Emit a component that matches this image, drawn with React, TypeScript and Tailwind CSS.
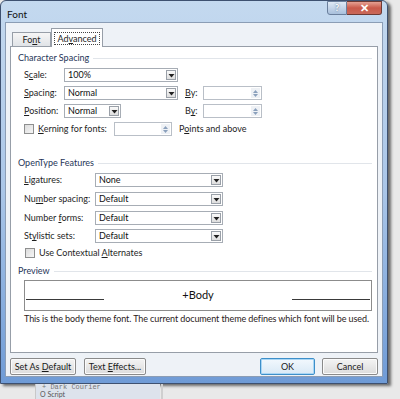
import React from "react";

function U({ children }: { children: React.ReactNode }) {
  return <span className="underline underline-offset-[1px]">{children}</span>;
}

function Tri() {
  return (
    <svg width="7" height="5" viewBox="0 0 7 5">
      <path d="M0.5 1 L6.5 1 L3.5 4.5 Z" fill="#222" />
    </svg>
  );
}

function Combo({ value, w }: { value: string; w: string }) {
  return (
    <div className={"flex h-[14px] items-stretch border border-[#a7adb5] bg-white " + w}>
      <span className="flex-1 pl-[3px] leading-[12px] text-[#111]">{value}</span>
      <span className="m-[1px] flex w-[10px] items-center justify-center border border-[#9aa0a8] bg-gradient-to-b from-[#fafafa] to-[#dedede]">
        <Tri />
      </span>
    </div>
  );
}

function Spin({ w }: { w: string }) {
  return (
    <div className={"flex h-[14px] items-stretch border border-[#b9bfc7] bg-white " + w}>
      <span className="flex-1" />
      <span className="m-[1px] flex w-[9px] flex-col items-center justify-center gap-[1px] bg-[#eef1f5]">
        <svg width="5" height="3" viewBox="0 0 5 3">
          <path d="M0 3 L5 3 L2.5 0 Z" fill="#8aa0bc" />
        </svg>
        <svg width="5" height="3" viewBox="0 0 5 3">
          <path d="M0 0 L5 0 L2.5 3 Z" fill="#8aa0bc" />
        </svg>
      </span>
    </div>
  );
}

function Check() {
  return <span className="h-[10px] w-[10px] border border-[#8e8f8f] bg-gradient-to-br from-[#dcdcdc] to-[#f6f6f6]" />;
}

function Heading({ text }: { text: string }) {
  return (
    <div className="flex h-[12px] items-center pl-[7px] pr-[5px]">
      <span className="text-[#1f3558]">{text}</span>
      <span className="ml-[4px] h-px flex-1 bg-[#e1e5ea]" />
    </div>
  );
}

function Btn({ children, w, def }: { children: React.ReactNode; w: string; def?: boolean }) {
  return (
    <div
      className={
        "flex h-[17px] items-center justify-center rounded-[2px] border bg-gradient-to-b text-[#1a1a1a] " +
        w +
        (def
          ? " border-[#3d8fc9] from-[#f2f8fd] to-[#d9e9f6] shadow-[inset_0_0_0_1px_#a9d6f5]"
          : " border-[#8a8a8a] from-[#f4f4f4] to-[#dcdcdc] shadow-[inset_0_0_0_1px_#fbfbfb]")
      }
    >
      <span>{children}</span>
    </div>
  );
}

export default function App() {
  return (
    <div className="flex h-[399px] w-[400px] flex-col overflow-hidden bg-[#e9e9e9] font-['Lato',sans-serif] text-[9px] text-[#1e1e1e]">
      <div className="flex h-[384px] w-[388px] shrink-0 flex-col rounded-t-[6px] border border-[#3e5170] bg-gradient-to-b from-[#c4d9ef] via-[#aac6e8] to-[#6f9bd6] px-[4px] pb-[6px] shadow-[3px_2px_3px_rgba(0,0,0,0.55)]">
        {/* title bar */}
        <div className="flex h-[21px] shrink-0 items-start">
          <span className="mt-[6px] ml-[2px] text-[10px] text-[#111]">Font</span>
          <div className="ml-auto mr-[1px] flex h-[14px]">
            <div className="flex w-[20px] items-center justify-center rounded-bl-[3px] border border-[#6a7f9c] bg-gradient-to-b from-[#dfe9f5] to-[#a9c0dc] text-[9px] font-bold text-white [text-shadow:0_0_2px_#35506f]">
              ?
            </div>
            <div className="flex w-[35px] items-center justify-center rounded-br-[3px] border border-l-0 border-[#6e3a34] bg-gradient-to-b from-[#e5a093] via-[#c9594a] to-[#c9695a] text-[11px] font-bold text-white">
              ✕
            </div>
          </div>
        </div>

        {/* client area */}
        <div className="flex flex-1 flex-col border border-[#8b9db5] bg-[#eef2f7] px-[4px]">
          {/* tabs */}
          <div className="mt-[5px] flex h-[18px] items-end pl-[2px]">
            <div className="flex h-[14px] w-[39px] items-center justify-center border border-b-0 border-[#979ea8] bg-gradient-to-b from-[#f6f6f6] to-[#e0e3e7]">
              <span>
                Fo<U>n</U>t
              </span>
            </div>
            <div className="relative z-10 -mb-px flex h-[19px] w-[52px] items-center justify-center border border-b-0 border-[#979ea8] bg-white">
              <span className="border border-dotted border-[#444] px-[2px] leading-[11px]">
                Ad<U>v</U>anced
              </span>
            </div>
          </div>

          {/* panel */}
          <div className="flex h-[307px] flex-col border border-[#979ea8] bg-white">
            <div className="mt-[5px]">
              <Heading text="Character Spacing" />
            </div>

            <div className="mt-[4px] flex h-[14px] items-center pl-[13px]">
              <span className="w-[40px]">
                S<U>c</U>ale:
              </span>
              <Combo value="100%" w="w-[114px]" />
            </div>
            <div className="mt-[4px] flex h-[14px] items-center pl-[13px]">
              <span className="w-[40px]">
                <U>S</U>pacing:
              </span>
              <Combo value="Normal" w="w-[114px]" />
              <span className="ml-[7px] w-[18px]">
                <U>B</U>y:
              </span>
              <Spin w="w-[59px]" />
            </div>
            <div className="mt-[4px] flex h-[14px] items-center pl-[13px]">
              <span className="w-[40px]">
                <U>P</U>osition:
              </span>
              <Combo value="Normal" w="w-[57px]" />
              <span className="ml-[64px] w-[18px]">
                B<U>y</U>:
              </span>
              <Spin w="w-[59px]" />
            </div>
            <div className="mt-[4px] flex h-[14px] items-center pl-[13px]">
              <Check />
              <span className="ml-[4px] w-[76px]">
                <U>K</U>erning for fonts:
              </span>
              <Spin w="w-[58px]" />
              <span className="ml-[7px]">
                P<U>o</U>ints and above
              </span>
            </div>

            <div className="mt-[21px]">
              <Heading text="OpenType Features" />
            </div>
            <div className="mt-[4px] flex h-[14px] items-center pl-[13px]">
              <span className="w-[71px]">
                <U>L</U>igatures:
              </span>
              <Combo value="None" w="w-[128px]" />
            </div>
            <div className="mt-[5px] flex h-[14px] items-center pl-[13px]">
              <span className="w-[71px]">
                Nu<U>m</U>ber spacing:
              </span>
              <Combo value="Default" w="w-[128px]" />
            </div>
            <div className="mt-[5px] flex h-[14px] items-center pl-[13px]">
              <span className="w-[71px]">
                Number <U>f</U>orms:
              </span>
              <Combo value="Default" w="w-[128px]" />
            </div>
            <div className="mt-[4px] flex h-[14px] items-center pl-[13px]">
              <span className="w-[71px]">
                St<U>y</U>listic sets:
              </span>
              <Combo value="Default" w="w-[128px]" />
            </div>
            <div className="mt-[4px] flex h-[12px] items-center pl-[14px]">
              <Check />
              <span className="ml-[4px]">
                Use Contextual <U>A</U>lternates
              </span>
            </div>

            <div className="mt-[6px]">
              <Heading text="Preview" />
            </div>
            <div className="mt-[3px] ml-[13px] mr-[5px] flex h-[31px] flex-col border border-[#8c8c8c]">
              <div className="flex h-[19px] items-end">
                <span className="ml-px h-px w-[78px] bg-[#3a3a3a]" />
                <span className="mx-auto mb-[-2px] text-[11px] leading-[14px] text-[#111]">+Body</span>
                <span className="mr-px h-px w-[78px] bg-[#3a3a3a]" />
              </div>
            </div>
            <div className="mt-[1px] whitespace-nowrap pl-[13px] tracking-[-0.1px] text-[#2a2020]">
              This is the body theme font. The current document theme defines which font will be used.
            </div>
          </div>

          {/* buttons */}
          <div className="mt-[5px] flex items-center">
            <Btn w="w-[66px]">
              Set As <U>D</U>efault
            </Btn>
            <Btn w="ml-[8px] w-[62px]">
              Text <U>E</U>ffects...
            </Btn>
            <Btn w="ml-auto w-[55px]" def>
              OK
            </Btn>
            <Btn w="ml-[7px] w-[56px]">Cancel</Btn>
          </div>
        </div>
      </div>

      {/* document behind the dialog */}
      <div className="flex flex-1 overflow-hidden">
        <div className="ml-[35px] w-[125px] overflow-hidden border-l border-[#c8c8c8] bg-[#dde3ec]">
          <div className="pl-[6px] font-['Liberation_Mono',monospace] text-[7px] leading-[7px] text-[#777]">
            + Dark Courier
          </div>
          <div className="pl-[4px] text-[7px] leading-[7px] text-[#555]">O Script</div>
        </div>
        <div className="ml-[1px] w-[2px] bg-[#cfcfcf]" />
      </div>
    </div>
  );
}
